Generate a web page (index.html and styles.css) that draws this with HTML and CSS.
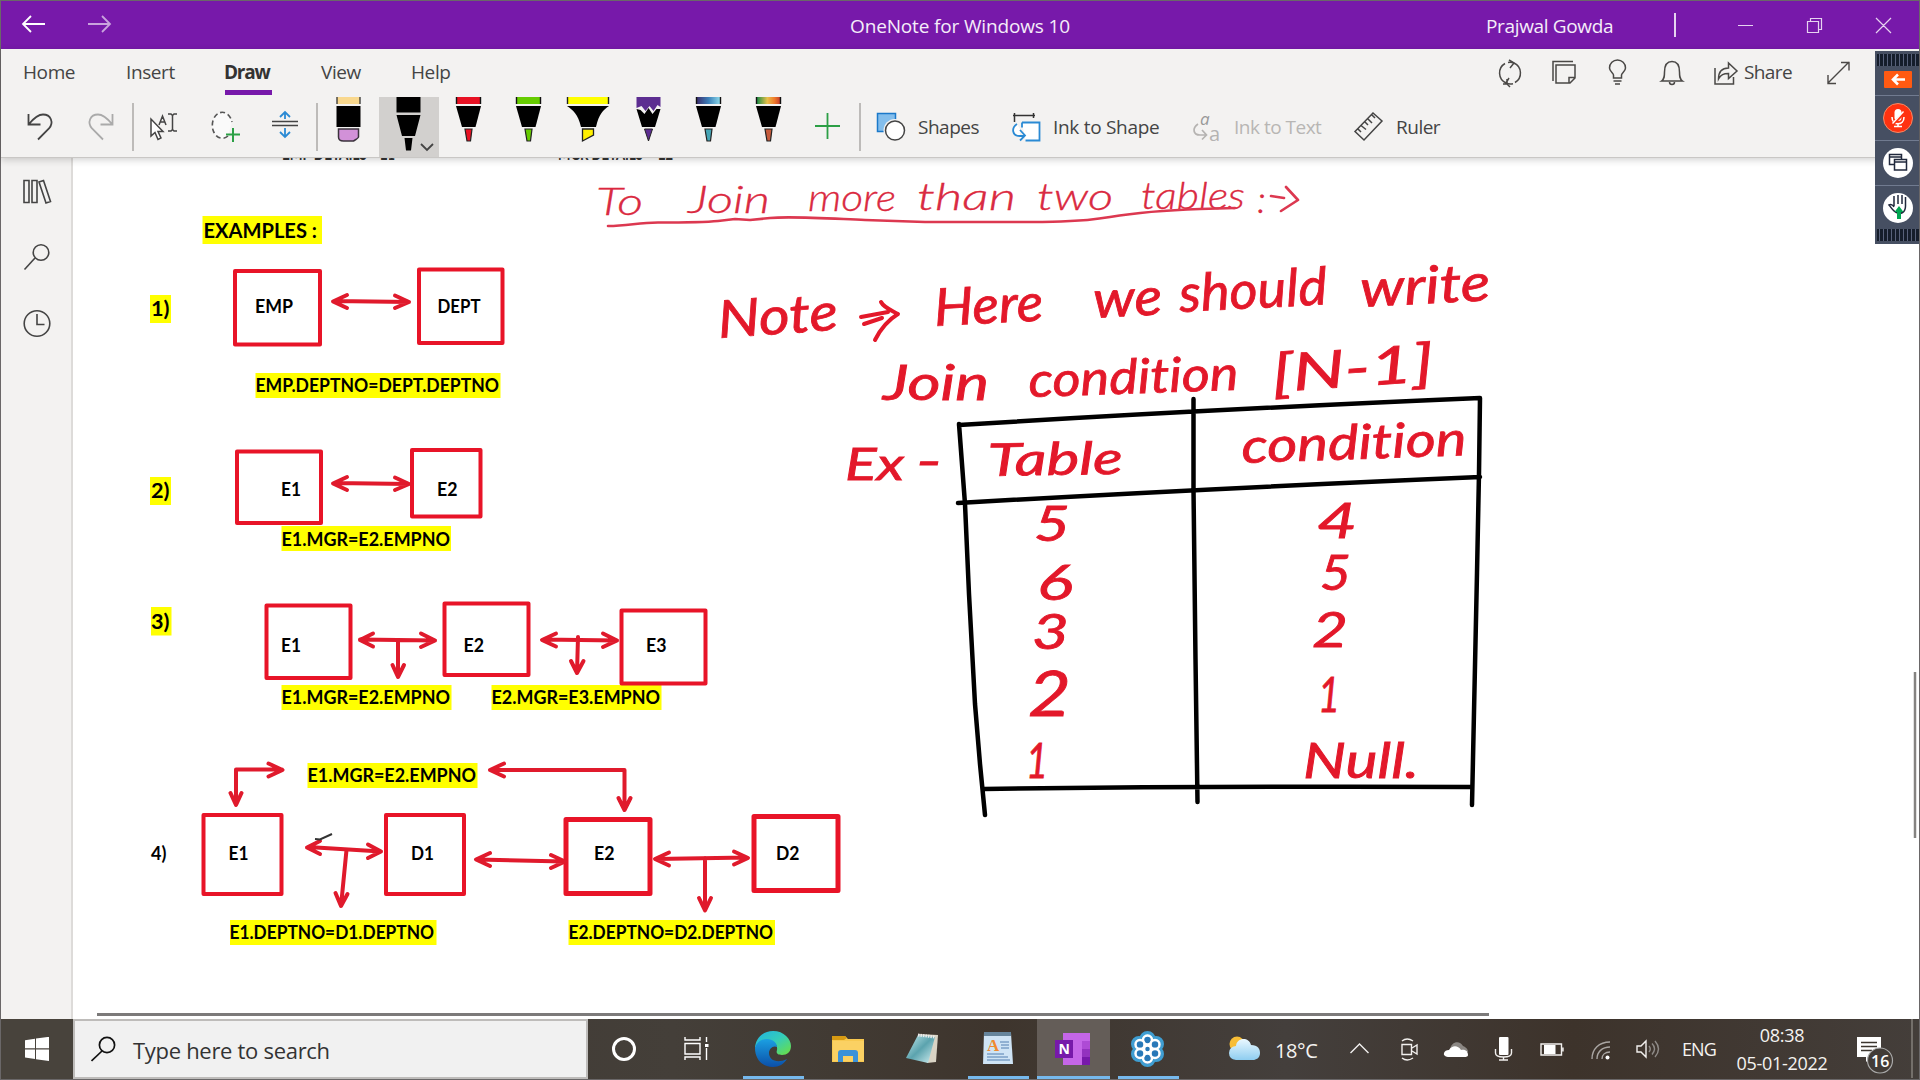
FILE: index.html
```html
<!DOCTYPE html>
<html lang="en">
<head>
<meta charset="utf-8">
<title>OneNote for Windows 10</title>
<link rel="stylesheet" href="styles.css">
</head>
<body>
<svg class="defs" aria-hidden="true">
  <defs>
    <linearGradient id="galaxy"><stop offset="0" stop-color="#3b2b6b"/><stop offset=".5" stop-color="#3b7fb8"/><stop offset="1" stop-color="#8fdcec"/></linearGradient>
    <linearGradient id="rainbow"><stop offset="0" stop-color="#118a46"/><stop offset=".45" stop-color="#e8c04a"/><stop offset=".75" stop-color="#ef7a2a"/><stop offset="1" stop-color="#c23a2c"/></linearGradient>
    <linearGradient id="edge-green" x1="0" y1="0" x2="1" y2="1"><stop offset="0" stop-color="#1fb3e6"/><stop offset=".5" stop-color="#35cdb8"/><stop offset="1" stop-color="#6ee03c"/></linearGradient>
    <linearGradient id="edge-blue" x1="0" y1="0" x2="0" y2="1"><stop offset="0" stop-color="#1ba0e2"/><stop offset="1" stop-color="#0b4fa8"/></linearGradient>
    <linearGradient id="pad" x1="0" y1="0" x2="1" y2="1"><stop offset="0" stop-color="#c9edf0"/><stop offset=".5" stop-color="#5ba3ae"/><stop offset="1" stop-color="#d5f1f3"/></linearGradient>
    <linearGradient id="flower" x1="0" y1="0" x2="0" y2="1"><stop offset="0" stop-color="#5cc3e8"/><stop offset="1" stop-color="#2f4fa0"/></linearGradient>
    <linearGradient id="cloud" x1="0" y1="0" x2="0" y2="1"><stop offset="0" stop-color="#eaf8ff"/><stop offset="1" stop-color="#8ecdf0"/></linearGradient>
    <g id="pen-body"><path d="M18 0v7M42 0v7" stroke="#111" stroke-width="1.4"/><path d="M17.5 9h25l-5.5 21h-13.500z" fill="#000"/></g>
  </defs>
</svg>
<div class="window">
  <header class="titlebar">
    <svg class="nav-arrows" viewBox="0 0 120 48" width="120" height="48"><g fill="none" stroke-width="1.8"><path d="M22 23h22M30 15l-8 8 8 8" stroke="#fff"/><path d="M87 23h22M101 15l8 8-8 8" stroke="#c9a3dd"/></g></svg>
    <div class="title">OneNote for Windows 10</div>
    <div class="account">Prajwal Gowda</div>
    <svg class="caption" viewBox="1660 1 258 48" width="258" height="48"><g fill="none" stroke="#e6d3f0" stroke-width="1.2"><path d="M1675 13v24" stroke-width="2"/><path d="M1738 25.500h15M1807.500 21.500h11v11h-11zM1810.500 21v-2.500h11v11h-2.500M1876 18l15 15M1891 18l-15 15"/></g></svg>
  </header>

  <div class="ribbon">
    <nav class="tabs">
      <span class="tab home">Home</span><span class="tab insert">Insert</span><span class="tab draw">Draw</span><span class="tab view">View</span><span class="tab help">Help</span>
      <div class="tools-right">
        <svg viewBox="1490 49 220 46" width="220" height="46"><g fill="none" stroke="#4a4846" stroke-width="1.5">
          <path d="M1506 83a11 11 0 0 1-1-19.500M1503 84h4v-5M1514 63a11 11 0 0 1 1 19.500M1509 60l5 3-4 5M1510 87l-4-4 3-5"/><path d="M1508 62.500a11 11 0 0 1 6 .5M1506 83q3 1.500 7 .7"/>
          <path d="M1553 81v-19.500h20M1556 65h19v13l-5 5h-14zM1575 77.500h-6v6"/>
          <path d="M1613.500 78v-3c0-2-4-3.500-4-7a8 8 0 0 1 16 0c0 3.500-4 5-4 7v3zM1613.500 81h8M1615 84h5"/>
          <path d="M1661.500 81c3-2 3-5 3-9 0-7 3-10.500 7.500-10.500s7.500 3.500 7.500 10.500c0 4 0 7 3 9zM1669.500 82a2.500 2.500 0 0 0 5 0"/></g></svg>
        <svg viewBox="1710 49 34 46" width="34" height="46"><path d="M1715 68v16h18.500v-7M1718.500 79c0-8 4-11 10-11v-5l8.500 8-8.500 7.500v-5c-5 0-7.500 1-10 5.500z" fill="none" stroke="#4a4846" stroke-width="1.5"/></svg>
        <span class="share">Share</span>
        <svg viewBox="1794 49 80 46" width="80" height="46"><path d="M1828 83l21-21M1841 62.500h8v8M1828 75v8.500h8" fill="none" stroke="#4a4846" stroke-width="1.4"/></svg>
      </div>
    </nav>
    <div class="toolbar">
      <svg viewBox="1 97 71 60" width="71" height="60"><path d="M28.500 114v10.500h12M29 124c5-6 9-9.500 14-9.500 8 0 11 8 6 14l-11 11" fill="none" stroke="#444" stroke-width="1.8"/></svg>
      <svg viewBox="72 97 59 60" width="59" height="60"><path d="M112.500 114v10.500h-12M112 124c-5-6-9-9.500-14-9.500-8 0-11 8-6 14l11 11" fill="none" stroke="#aaa" stroke-width="1.8"/></svg>
      <i class="sep"></i>
      <svg viewBox="135 97 60 60" width="60" height="60"><path d="M151 119v17l4-3.500 3 7 3-1.500-3-6.500h5z" fill="#fff" stroke="#444" stroke-width="1.5"/><path d="M159 125l3.500-9 3.500 9M160 122h5M168 114h3l1.500 1.500 1.500-1.500h3M168 131h3l1.500-1.500 1.500 1.500h3M172.500 115v15" fill="none" stroke="#444" stroke-width="1.5"/></svg>
      <svg viewBox="195 97 60 60" width="60" height="60"><path d="M228 136a10 13 0 1 1 4-14" fill="#fafafa" stroke="#555" stroke-width="1.6" stroke-dasharray="5 3"/><path d="M226 134.500h14M233 128v14" stroke="#2b9f45" stroke-width="2"/></svg>
      <svg viewBox="255 97 60 60" width="60" height="60"><path d="M272 121.500h26M272 125.500h26" stroke="#444" stroke-width="1.6"/><path d="M285 119v-6M280 117l5-5 5 5M285 128v9M280 132l5 5 5-5" fill="none" stroke="#2a8ad4" stroke-width="1.800"/></svg>
      <i class="sep"></i>
      <svg viewBox="319 97 60 60" width="60" height="60"><path d="M337 97h23v7h-23z" fill="#f9d88e"/><path d="M337 97v7M360 97v7" stroke="#333" stroke-width="1.3"/><path d="M336.500 106h24v21h-24z"/><path d="M338.500 129h20v8q0 1-5 4h-10q-5 0-5-4z" fill="#d291d8" stroke="#3b333d" stroke-width="1.5"/></svg>
      <div class="pen selected"><svg viewBox="0 0 60 60" width="60" height="60"><path d="M17.500 0h24v15.500h-24zM17.500 18h24l-5.500 21h-13zM25.500 41h8l-1.500 12.500h-5z"/><path d="M42 47l6 6 6-6" fill="none" stroke="#444" stroke-width="1.8"/></svg></div>
      <svg class="pen" viewBox="0.500 0 60 60"><path d="M18 0h24v7H18z" fill="#e81123"/><use href="#pen-body"/><path d="M26.500 32h7l-1.500 12h-3.500z" fill="#e81123" stroke="#222" stroke-width="1.2"/></svg>
      <svg class="pen" viewBox="0.500 0 60 60"><path d="M18 0h24v7H18z" fill="#66cc00"/><use href="#pen-body"/><path d="M26.500 32h7l-1.500 12h-3.500z" fill="#66cc00" stroke="#222" stroke-width="1.2"/></svg>
      <svg class="pen" viewBox="0.500 0 60 60"><path d="M9 0h41v7H9z" fill="#ffff00"/><path d="M9 0v7M50 0v7" stroke="#222" stroke-width="1.4"/><path d="M8.500 9h42c-6 4-10 8-13 21h-15c-3-13-8-17-14-21z"/><path d="M24 32h11v6l-11 6z" fill="#fff000" stroke="#222" stroke-width="1.3"/></svg>
      <svg class="pen" viewBox="0.500 0 60 60"><path d="M18 0h24v10l-3-2-4 6-4-5-4 5-4-5-5 2z" fill="#5c2d91"/><path d="M18 12l4 1 4 4 4-6 4 6 4-5 4 0-5.500 18h-13z"/><path d="M26 32h8l-4 12z" fill="#5c2d91" stroke="#222"/></svg>
      <svg class="pen" viewBox="0.500 0 60 60"><path d="M18 0h24v7H18z" fill="url(#galaxy)"/><use href="#pen-body"/><path d="M26.500 32h7l-1.500 12h-3.500z" fill="#45a5b5" stroke="#222" stroke-width="1.2"/></svg>
      <svg class="pen" viewBox="0.500 0 60 60"><path d="M18 0h24v7H18z" fill="url(#rainbow)"/><use href="#pen-body"/><path d="M26.500 32h7l-1.500 12h-3.500z" fill="#c65b3c" stroke="#222" stroke-width="1.2"/></svg>
      <svg viewBox="799 97 59 60" width="59" height="60"><path d="M815 126h25M827.500 113v26" stroke="#2b9f45" stroke-width="1.8"/></svg>
      <i class="sep"></i>
      <svg viewBox="862 97 56 60" width="56" height="60"><path d="M877.500 113.500h18v18h-18z" fill="#83beec" stroke="#1b79c9" stroke-width="1.500"/><circle cx="895" cy="130.500" r="11.500" fill="#f3f2f1"/><circle cx="895" cy="130.500" r="9.500" fill="#fff" stroke="#444" stroke-width="1.500"/></svg>
      <span class="cmd shapes">Shapes</span>
      <svg viewBox="1003 97 50 60" width="50" height="60"><path d="M1013 115.500h22M1014.500 113v9M1033.500 113v5" fill="none" stroke="#333" stroke-width="1.5"/><path d="M1022 122.500h17.500v18h-14M1022 122.500v5M1017 124c-6 4-5 12 3 12h4M1020 130l5 5.500-5 5" fill="#fff" stroke="#2a8ad4" stroke-width="1.800"/></svg>
      <span class="cmd ink-shape">Ink to Shape</span>
      <svg viewBox="1178 97 56 60" width="56" height="60"><path d="M1198 124c-6 4-5 11 2 11h6M1202 130l4.500 5-4.500 4.500" fill="none" stroke="#b5b3b1" stroke-width="1.700"/><text class="glyph-a slanted" x="1200" y="125">a</text><text class="glyph-a" x="1209" y="141">a</text></svg>
      <span class="cmd ink-text">Ink to Text</span>
      <svg viewBox="1340 97 56 60" width="56" height="60"><path d="M1355 131.500l18-18.500 9 8-18 19zM1358 129l3 3M1361 125.500l5 4M1365 122l3 3M1368 119l4 4M1372 115l3 3" fill="none" stroke="#444" stroke-width="1.500"/></svg>
      <span class="cmd ruler">Ruler</span>
    </div>
  </div>

  <main class="content">
    <aside class="rail">
      <svg viewBox="1 158 72 200" width="72" height="200"><g fill="none" stroke="#444" stroke-width="1.6"><path d="M24 180.500h5v22h-5zM32 180.500h5v22h-5zM39 182l4.500-1.500 7 21-4.500 1.500z"/><circle cx="41" cy="252.500" r="7.800"/><path d="M35 258l-10.500 11.500"/><circle cx="37" cy="323.500" r="12.800"/><path d="M37 314v10.500h7.500"/></g></svg>
    </aside>
    <svg class="page" viewBox="73 158 1846 861" width="1846" height="861">
      <g class="note faded">
        <text x="282" y="160" textLength="85" lengthAdjust="spacingAndGlyphs">EMP DETAILS</text><text x="380" y="160" textLength="15" lengthAdjust="spacingAndGlyphs">E1</text>
        <text x="558" y="160" textLength="85" lengthAdjust="spacingAndGlyphs">MGR DETAILS</text><text x="658" y="160" textLength="15" lengthAdjust="spacingAndGlyphs">E2</text>
      </g>
      <path class="mark" d="M202.500 216h119.500v28H202.500zM150 295h21v28h-21zM255.500 373h245v25h-245zM150 477h21v28h-21zM281.500 526h169.500v25h-169.500zM151 607h20.500v28.500h-20.500zM281.500 685h170v25h-170zM491.500 685h170v25h-170zM307.500 763h170v25h-170zM230 920h206.500v25H230zM568.500 920H775v25H568.500z"/>
      <g class="box">
        <path d="M235 271h85v73.500H235zM419 269.500h83.500v73.500H419zM237 451.500h84v71.500h-84zM412 450h68.500v66.500H412zM266.500 605.500h84v72.500h-84zM444.500 603.500h84v71.500h-84zM621.500 610.500h84v73h-84zM203.500 815h78v79h-78zM386 815h78v79h-78z"/>
        <path class="heavy" d="M566 819.500h84v74h-84zM754 816.500h84v74h-84z"/>
      </g>
      <g class="arrow">
        <path d="M334 301l75 1M347 295l-14 6.500 14 6.500M395 295.500l14 6.500-14 6"/>
        <path d="M334 483l75 1M347 477l-14 6.500 14 6.500M395 477.500l14 6.500-14 6"/>
        <path d="M360 639.500l75 1M373 633.500l-13 6.500 13 6.500M421 633.500l14 7-14 6.500M398 640v36M392.500 665l5.500 12 6-12"/>
        <path d="M543 639.500l74 1M556 633.500l-14 6.500 14 6.500M603 633.500l14 7-14 6.500M578 637l-1 36M571 661l6 12 6.500-12"/>
        <path d="M236 804v-34.500h46M268.500 763.500l14 6.500-14 6.500M230.500 793l5.500 12 5.500-12"/>
        <path d="M490 770h134.500v40M504 763.500l-14 6.500 14 6.500M618.500 798l6 12 6-12"/>
        <path d="M308 847l73 4.500M320 841l-13 6.500 13 6.500M368 844.500l13 7-13 6.500M346.500 850l-5.500 56M335.500 893l5.500 13 6.500-12"/>
        <path d="M477 859.500l87 2M490 853l-14 6.500 14 6.500M551 855l14 6.500-14 6.500"/>
        <path d="M656 859l91-1.500M669 852.500l-14 6.500 14 6.500M734 851.500l14 6.500-14 6.500M705 858v52M699 898l6 12.500 6-12.500"/>
      </g>
      <path d="M315 839l5 .5 12-5.500" class="tick"/>
      <g class="note">
        <g class="big"><text x="203.500" y="238" textLength="113.500" lengthAdjust="spacingAndGlyphs">EXAMPLES :</text><text x="151" y="315.500" textLength="18.500" lengthAdjust="spacingAndGlyphs">1)</text><text x="151" y="498" textLength="18.500" lengthAdjust="spacingAndGlyphs">2)</text><text x="151" y="628.500" textLength="18.500" lengthAdjust="spacingAndGlyphs">3)</text></g>
        <text x="255" y="313" textLength="38" lengthAdjust="spacingAndGlyphs">EMP</text>
        <text x="437.500" y="313" textLength="43" lengthAdjust="spacingAndGlyphs">DEPT</text>
        <text x="255.500" y="392" textLength="243.500" lengthAdjust="spacingAndGlyphs">EMP.DEPTNO=DEPT.DEPTNO</text>
        <text x="281" y="495.500" textLength="20" lengthAdjust="spacingAndGlyphs">E1</text><text x="437" y="495.500" textLength="20.500" lengthAdjust="spacingAndGlyphs">E2</text>
        <text x="281.500" y="545.500" textLength="168.500" lengthAdjust="spacingAndGlyphs">E1.MGR=E2.EMPNO</text>
        <text x="281" y="652" textLength="20" lengthAdjust="spacingAndGlyphs">E1</text><text x="463.500" y="652" textLength="20.500" lengthAdjust="spacingAndGlyphs">E2</text><text x="646" y="652" textLength="20.500" lengthAdjust="spacingAndGlyphs">E3</text>
        <text x="281.500" y="704" textLength="168.500" lengthAdjust="spacingAndGlyphs">E1.MGR=E2.EMPNO</text>
        <text x="491.500" y="704" textLength="168.500" lengthAdjust="spacingAndGlyphs">E2.MGR=E3.EMPNO</text>
        <text x="307.500" y="782" textLength="168.500" lengthAdjust="spacingAndGlyphs">E1.MGR=E2.EMPNO</text>
        <text x="151" y="860">4)</text><text x="228.500" y="860" textLength="20" lengthAdjust="spacingAndGlyphs">E1</text><text x="411" y="860" textLength="23" lengthAdjust="spacingAndGlyphs">D1</text><text x="594" y="860" textLength="20.500" lengthAdjust="spacingAndGlyphs">E2</text><text x="776" y="860" textLength="23.500" lengthAdjust="spacingAndGlyphs">D2</text>
        <text x="229.500" y="938.500" textLength="204.500" lengthAdjust="spacingAndGlyphs">E1.DEPTNO=D1.DEPTNO</text>
        <text x="568.500" y="938.500" textLength="204.500" lengthAdjust="spacingAndGlyphs">E2.DEPTNO=D2.DEPTNO</text>
      </g>
      <g class="ink thin">
        <text x="596" y="215" textLength="47" lengthAdjust="spacingAndGlyphs">To</text>
        <text x="688" y="213" textLength="82" lengthAdjust="spacingAndGlyphs">Join</text>
        <text x="808" y="211" textLength="88" lengthAdjust="spacingAndGlyphs">more</text>
        <text x="917" y="210" textLength="99" lengthAdjust="spacingAndGlyphs">than</text>
        <text x="1037" y="210" textLength="76" lengthAdjust="spacingAndGlyphs">two</text>
        <text x="1141" y="209" textLength="104" lengthAdjust="spacingAndGlyphs">tables</text>
        <text x="1257" y="213">:</text>
        <path d="M608 226c20 0 30-3.500 50-3.500s45 0 60-1.500l17-2 15 1 20-2c20-2 50 0 95 2l60 2h60c50 0 90 1 125-5 30-5 60-7 90-8l35-1M1271 196l13 2M1286 187l12 13-17 11"/>
      </g>
      <g class="ink">
        <text class="xl" x="0" y="0" transform="translate(719 338) rotate(-4)" textLength="120" lengthAdjust="spacingAndGlyphs">Note</text>
        <path d="M861 317l27-5M864 324l18-6M881 302c3 6 12 9 17 12-10 6-18 16-23 26"/>
        <text class="xl" x="0" y="0" transform="translate(935 326) rotate(-3)" textLength="109" lengthAdjust="spacingAndGlyphs">Here</text>
        <text class="xl" x="0" y="0" transform="translate(1094 318) rotate(-3)" textLength="69" lengthAdjust="spacingAndGlyphs">we</text>
        <text class="xl" x="0" y="0" transform="translate(1180 312) rotate(-3)" textLength="148" lengthAdjust="spacingAndGlyphs">should</text>
        <text class="xl" x="0" y="0" transform="translate(1361 307) rotate(-3)" textLength="130" lengthAdjust="spacingAndGlyphs">write</text>
        <text class="lg" x="883" y="400" textLength="106" lengthAdjust="spacingAndGlyphs">Join</text>
        <text class="lg" x="0" y="0" transform="translate(1029 397) rotate(-2)" textLength="210" lengthAdjust="spacingAndGlyphs">condition</text>
        <text class="xl" x="0" y="0" transform="translate(1273 392) rotate(-4)" textLength="162" lengthAdjust="spacingAndGlyphs">[N-1]</text>
        <text class="md" x="845" y="480" textLength="59" lengthAdjust="spacingAndGlyphs">Ex</text><text class="md" x="0" y="0" transform="translate(916 477)" textLength="26" lengthAdjust="spacingAndGlyphs">-</text>
        <text class="md" x="0" y="0" transform="translate(988 476) rotate(-1)" textLength="135" lengthAdjust="spacingAndGlyphs">Table</text>
        <text class="lg" x="0" y="0" transform="translate(1242 463) rotate(-2)" textLength="225" lengthAdjust="spacingAndGlyphs">condition</text>
        <g class="lg">
          <text x="1034" y="541" textLength="36" lengthAdjust="spacingAndGlyphs">5</text><text x="1037" y="600" textLength="36" lengthAdjust="spacingAndGlyphs">6</text><text x="1032" y="649" textLength="37" lengthAdjust="spacingAndGlyphs">3</text><text class="tall" x="1028" y="716" textLength="43" lengthAdjust="spacingAndGlyphs">2</text><text x="1026" y="778" textLength="22" lengthAdjust="spacingAndGlyphs">1</text>
          <text x="1317" y="538" textLength="40" lengthAdjust="spacingAndGlyphs">4</text><text x="1320" y="590" textLength="31" lengthAdjust="spacingAndGlyphs">5</text><text x="1312" y="647" textLength="36" lengthAdjust="spacingAndGlyphs">2</text><text x="1318" y="712" textLength="22" lengthAdjust="spacingAndGlyphs">1</text>
          <text x="1303" y="778" textLength="116" lengthAdjust="spacingAndGlyphs">Null.</text>
        </g>
      </g>
      <g class="grid"><path d="M959 425q240-15 521-27M958 503q240-14 522-26M959 424l6 80 4 90 6 110 5 60 5 51M1193.500 399v90l2 170 2 143M1480 398l-1 75-2 100-5 232M984 789q240-3 488-2"/></g>
      <path d="M97 1014.500h1392" stroke="#7c7a7a" stroke-width="3"/>
      <path d="M1915 672v166" stroke="#858381" stroke-width="2.500"/>
    </svg>
  </main>

  <footer class="taskbar">
    <div class="start"><svg viewBox="25 1037 24 24" width="24" height="24"><path d="M25 1040.200l10-1.400v9.500H25zM36 1038.600l13-1.800v11.500H36zM25 1049.500h10v9.500l-10-1.400zM36 1049.500h13V1061l-13-1.800z" fill="#fff"/></svg></div>
    <div class="search"><svg viewBox="91 1036 25 26" width="25" height="26"><circle cx="107" cy="1045" r="7.600" fill="none" stroke="#111" stroke-width="1.700"/><path d="M102 1051l-10.500 10" stroke="#111" stroke-width="1.700"/></svg><span>Type here to search</span></div>
    <svg viewBox="588 1019 449 60" width="449" height="60">
      <circle cx="624" cy="1049" r="10.500" fill="none" stroke="#fff" stroke-width="3"/>
      <path d="M685 1037v3h15v-3M685 1060v-3h15v3M685 1043.500h15v10.500h-15zM706.500 1037v5M706.500 1048v12" fill="none" stroke="#fff" stroke-width="1.400"/><path d="M705 1044h3.500v3H705z" fill="#fff"/>
      <path d="M755 1049c0-10 7-18 18-18 11 0 18 8 18 15 0 6-4 9-9 9-5 0-6-2-5-5 1-6-4-9-9-9-7 0-12 4-13 8z" fill="url(#edge-green)"/><path d="M755 1048c1-5 6-9 12-9 6 0 10 4 10 8-4-2-8 2-8 6 0 7 8 11 18 6-3 5-8 8-14 8-11 0-18-8-18-19z" fill="url(#edge-blue)"/>
      <path d="M832 1036h13l3 3h16v23h-32z" fill="#f8c950"/><path d="M832 1036h13l2 2-3 2h-12z" fill="#d79a12"/><path d="M833 1041h31v20h-31z" fill="#fbd163"/><path d="M838 1062v-9q0-3 3-3h14q3 0 3 3v9h-5v-6h-10v6z" fill="#3a92d9"/>
      <path d="M918 1034l20 1-2 27-9 1z" fill="#d9d4c5"/><path d="M918 1035l17 2-7 26-22-5z" fill="url(#pad)"/><path d="M918 1035l17 2" stroke="#ececec" stroke-width="3" stroke-dasharray="1.500 1"/>
      <path d="M984 1033h27l2 31h-30z" fill="#cfe4f5"/><path d="M984 1032h27v4h-27z" fill="#66859c"/><path d="M1000 1042h9M1001 1045h8M1001 1048h8M987 1054h17M987 1057h21M987 1060h23" stroke="#527fb0"/><text class="wp" x="987" y="1051">A</text>
      <path d="M743 1076h61v3h-61zM968 1076h61v3h-61z" fill="#76b9ed"/>
    </svg>
    <div class="active-app"><svg viewBox="1037 1019 73 60" width="73" height="60"><path d="M1063 1033h27v32h-27z" fill="#c566e8"/><path d="M1082 1041h8v8h-8z" fill="#ae4bd5"/><path d="M1082 1049h8v8h-8z" fill="#9332bf"/><path d="M1082 1057h8v8h-8z" fill="#7719aa"/><path d="M1055 1040h18v18h-18z" fill="#7719aa"/><text class="n" x="1058.500" y="1054">N</text></svg></div>
    <svg viewBox="1110 1019 160 60" width="160" height="60">
      <g fill="url(#flower)" stroke="#3f9ed2" stroke-width="3"><circle cx="1147.500" cy="1039" r="6.500"/><circle cx="1147.500" cy="1059" r="6.500"/><circle cx="1139" cy="1044" r="6.500"/><circle cx="1156" cy="1044" r="6.500"/><circle cx="1139" cy="1054" r="6.500"/><circle cx="1156" cy="1054" r="6.500"/></g>
      <g fill="#2878b8" stroke="#fff" stroke-width="2.500"><circle cx="1147.500" cy="1040" r="4.500"/><circle cx="1147.500" cy="1058" r="4.500"/><circle cx="1140" cy="1044.500" r="4.500"/><circle cx="1155" cy="1044.500" r="4.500"/><circle cx="1140" cy="1053.500" r="4.500"/><circle cx="1155" cy="1053.500" r="4.500"/><circle cx="1147.500" cy="1049" r="3.500"/></g>
      <path d="M1118 1076h61v3h-61z" fill="#76b9ed"/>
      <circle cx="1237" cy="1044" r="7.500" fill="#f7bd36"/><path d="M1236 1060q-7-1-7-7t7-7c1-9 13-9 15-1 7 0 9 4 9 8 0 5-4 7-7 7z" fill="url(#cloud)"/>
    </svg>
    <span class="temp">18°C</span>
    <svg viewBox="1326 1019 350 60" width="350" height="60"><g fill="none" stroke="#f2f0ee" stroke-width="1.400">
      <path d="M1350.500 1053l9-9 9 9"/>
      <path d="M1402 1044.500h9.500v10H1402zM1412 1048l5-3v9l-5-3M1402 1041q5-4 11 0M1402 1058q5 4 11 0"/>
      <path d="M1447 1057q-3-6 3-7c1-9 10-10 13-4 5 2 5 5 5 6z" fill="#8b8783" stroke="none"/><path d="M1448 1057q-5-1-4-4 1-3 5-3c3-5 9-5 12 0 5-1 7 2 7 5q0 2-4 2z" fill="#fff" stroke="none"/>
      <rect x="1499" y="1037" width="9.500" height="18" rx="1" fill="#fff" stroke="none"/><path d="M1495.500 1049v4q0 4 8 4t8-4v-4M1503.500 1057v3M1499 1060h9"/>
      <path d="M1541 1044h20.500v11H1541zM1563 1047.500v4"/><path d="M1544 1045h11.500v9H1544z" fill="#fff" stroke="none"/>
      <path d="M1592 1059c0-10 7-17 18-17M1597 1059c0-7 5-12 13-12M1602 1059c0-4 3-7 8-7" stroke="#aaa6a3"/><circle cx="1607.500" cy="1057.500" r="2" fill="#fff" stroke="none"/>
      <path d="M1637 1046h4l5-5v16l-5-5h-4z"/><path d="M1649 1046q2.500 3 0 6M1652 1043.500q5 5 0 11M1655 1041q7 8 0 16" stroke="#8f8b88"/>
    </g></svg>
    <span class="lang">ENG</span>
    <div class="clock"><span>08:38</span><span>05-01-2022</span></div>
    <svg class="action" viewBox="1847 1019 72 60" width="72" height="60"><path d="M1857 1037h24v20h-10l-5 5v-5h-9z" fill="#fff"/><path d="M1861 1042.500h16M1861 1046.500h16M1861 1050.500h11" stroke="#3c362f" stroke-width="1.300"/><circle cx="1880" cy="1060.500" r="12.500" fill="#423c37" stroke="#aaa" stroke-width="1.200"/><text x="1871" y="1067">16</text><path d="M1912 1019v59" stroke="#85807b" stroke-width="1.500"/></svg>
  </footer>
</div>

<div class="dock">
  <i class="grip"></i>
  <div class="slot first"><svg viewBox="1884 71 28 17" width="28" height="17"><rect x="1884" y="71" width="28" height="17" rx="1" fill="#ff5a12"/><path d="M1905 79.500h-12M1898 74.500l-5 5 5 5" fill="none" stroke="#fff" stroke-width="2.600"/></svg></div>
  <div class="slot"><svg viewBox="1883 103 30 30" width="30" height="30"><circle cx="1898" cy="118" r="14.500" fill="#ff3210" stroke="#f78a66"/><rect x="1894.500" y="109" width="7" height="12" rx="3.500" fill="#fff"/><path d="M1892 117c0 9 12 9 12 0M1898 123v4M1894 126.500h8" fill="none" stroke="#fff" stroke-width="1.600"/><path d="M1893 124l12-12" stroke="#ff3210" stroke-width="3"/><path d="M1892.500 123.500l11-12" stroke="#fff" stroke-width="1.400"/></svg></div>
  <div class="slot"><svg viewBox="1883 148 30 30" width="30" height="30"><circle cx="1898" cy="163" r="15" fill="#fff"/><path d="M1889.500 154.500h12v10h-12zM1889 157h12" fill="#fff" stroke="#20283c" stroke-width="1.500"/><path d="M1894.500 159.500h12v10.500h-12zM1894 162h12" fill="#fff" stroke="#20283c" stroke-width="1.500"/></svg></div>
  <div class="slot last"><svg viewBox="1883 193 30 30" width="30" height="30"><circle cx="1898" cy="208" r="15" fill="#fff"/><path d="M1894 206v-10M1898 204v-9M1902 204v-9M1905.500 197v9c0 7-5 8-8 7-4-1-6-5-8.500-8 2-1 4 0 5 2" fill="none" stroke="#20283c" stroke-width="1.500"/><path d="M1897 219v-7h-2.500l4.500-6 4.500 6h-2.500v7z" fill="#00a651"/></svg></div>
  <i class="grip"></i>
</div>
</body>
</html>
```
FILE: styles.css
```css
* { box-sizing: border-box; }
html, body { margin: 0; width: 1920px; height: 1080px; overflow: hidden; }
body { background: #6a6768; padding: 1px; font-family: "Open Sans", "Noto Sans", sans-serif; color: #444; }
.defs { position: absolute; width: 0; height: 0; }
svg { display: block; flex: none; }
.window { width: 1918px; height: 1078px; display: flex; flex-direction: column; background: #fff; }

.titlebar { height: 48px; background: #7719aa; display: flex; align-items: center; color: #f5edf9; font-size: 19px; white-space: nowrap; flex: none; }
.title { margin-left: 729px; width: 636px; padding-top: 1px; letter-spacing: -0.15px; }
.account { width: 174px; padding-top: 1px; letter-spacing: -0.35px; }

.ribbon { height: 109px; background: #f3f2f1; flex: none; position: relative; z-index: 1; border-bottom: 1px solid #c9c7c5; box-shadow: 0 2px 7px rgba(0, 0, 0, .18); }
.tabs { height: 48px; display: flex; align-items: flex-start; font-size: 19px; letter-spacing: -0.4px; white-space: nowrap; }
.tab { line-height: 47px; height: 46px; }
.home { margin-left: 22px; width: 103px; }
.insert { width: 99px; }
.draw { width: 47px; font-weight: 700; color: #333; border-bottom: 5px solid #7719aa; letter-spacing: -1.2px; text-indent: -1px; }
.view { margin-left: 49px; width: 90px; }
.help { width: 59px; }
.tools-right { display: flex; margin-left: 1020px; }
.share { width: 50px; line-height: 46px; font-size: 19px; letter-spacing: -0.6px; }
.toolbar { height: 60px; display: flex; align-items: flex-start; white-space: nowrap; }
.sep { width: 2px; height: 48px; margin: 6px 1px 0; background: #bdbbb9; flex: none; }
.pen { width: 60px; height: 60px; flex: none; }
.selected { width: 60px; background: #d2d0ce; }
.cmd { line-height: 60px; font-size: 19px; letter-spacing: -0.5px; flex: none; }
.shapes { width: 85px; }
.ink-shape { width: 125px; letter-spacing: -0.3px; }
.ink-text { width: 106px; color: #b8b6b4; }
.ruler { width: 60px; }
.glyph-a { font: 20px "Open Sans", sans-serif; fill: #b5b3b1; }
.slanted { font-size: 17px; font-style: italic; fill: #999; }

.content { height: 861px; display: flex; flex: none; }
.rail { width: 72px; background: #f3f2f1; border-right: 2px solid #dddbd9; flex: none; }
.page { background: #fff; }
.mark { fill: #ffff00; }
.note { font: 700 18px Lato, "Open Sans", sans-serif; fill: #000; }
.faded { fill: #333; }
.big { font-size: 20px; }
.box, .arrow { fill: none; stroke: #e81428; stroke-width: 4; stroke-linejoin: round; stroke-linecap: round; }
.heavy { stroke-width: 5; }
.arrow { stroke: #e01a2c; }
.tick { fill: none; stroke: #333; stroke-width: 2; }
.ink { font: italic 400 44px Lato, "Open Sans", sans-serif; font-variant-ligatures: none; fill: #e3182a; }
.ink text { stroke: #e3182a; stroke-width: .8; }
.ink path { fill: none; stroke: #e3182a; stroke-width: 4; stroke-linecap: round; stroke-linejoin: round; }
.thin { font-size: 38px; font-weight: 300; fill: #d62c46; }
.thin text { stroke-width: .3; }
.thin path { stroke: #dc3850; stroke-width: 2.6; }
.xl { font-size: 52px; }
.lg { font-size: 48px; }
.md { font-size: 45px; }
.tall { font-size: 62px; }
.grid { fill: none; stroke: #000; stroke-width: 4.5; stroke-linecap: round; }

.taskbar { height: 60px; display: flex; align-items: center; background: linear-gradient(90deg, #3c342e, #443f39 35%, #3e352d 52%, #443f3c 67%, #3d332b 82%, #443e3a); color: #f5f3f1; white-space: nowrap; flex: none; }
.start { width: 72px; height: 60px; background: #48433c; display: flex; align-items: center; padding-left: 24px; flex: none; }
.search { width: 515px; height: 60px; background: #f1f1f1; border: 2px solid #bebcba; display: flex; align-items: center; padding-left: 16px; gap: 17px; color: #333; font-size: 22px; letter-spacing: -0.3px; flex: none; }
.search span { padding-top: 2px; }
.active-app { width: 73px; height: 60px; background: #645d58; border-bottom: 3px solid #76b9ed; overflow: hidden; flex: none; }
.n { font: 700 14px "Open Sans", sans-serif; fill: #fff; }
.wp { font: 700 17px "Liberation Serif", serif; fill: #f08a30; }
.temp { margin-left: 5px; width: 51px; padding-top: 2px; font-size: 20px; letter-spacing: -0.4px; }
.lang { margin-left: 6px; width: 53px; font-size: 18px; letter-spacing: -0.9px; }
.clock { width: 94px; display: flex; flex-direction: column; align-items: center; font-size: 18px; line-height: 28px; letter-spacing: -0.3px; }
.action { margin-left: 18px; }
.action text { font: 600 16px "Open Sans", sans-serif; fill: #fff; }

.dock { position: absolute; left: 1875px; top: 51px; width: 44px; height: 193px; background: #464f62; padding: 3px 0; z-index: 2; }
.grip { display: block; height: 12px; margin: 0 0 0 2px; background: repeating-linear-gradient(90deg, #151d2b 0 2px, #58617a 2px 3px, #151d2b 3px 4px); }
.slot { height: 45px; border-bottom: 1px solid #717b90; display: flex; align-items: center; justify-content: center; padding-left: 2px; }
.first { height: 30px; padding-bottom: 2px; }
.last { border: 0; height: 43px; }
```
